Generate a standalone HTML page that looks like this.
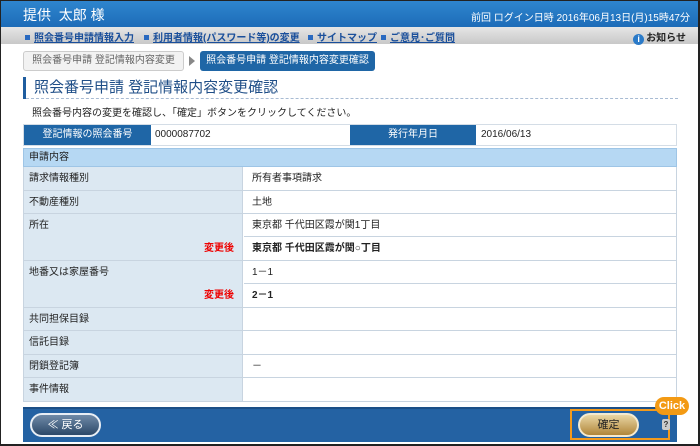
<!DOCTYPE html>
<html><head><meta charset="utf-8"><style>
*{margin:0;padding:0;box-sizing:border-box}
body{width:700px;height:446px;overflow:hidden;background:#fff;font-family:"Liberation Sans","Noto Sans CJK JP",sans-serif;font-size:11px;color:#222;position:relative}
.frame{position:absolute;left:0;top:0;width:700px;height:446px;border:1px solid #222;border-bottom-width:2px;border-right-width:2px;pointer-events:none;z-index:9}
.hdr{position:absolute;left:0;top:0;width:700px;height:27px;background:linear-gradient(#2f86cf,#1d6cb8);color:#fff}
.hdr .n{position:absolute;left:23px;top:5px;font-size:14px}
.hdr .d{position:absolute;right:10px;top:9px;font-size:10px}
.nav{position:absolute;left:0;top:27px;width:700px;height:17px;background:linear-gradient(#e6e6e6,#c8c8c8);font-size:10px;font-weight:bold}
.nav a{position:absolute;top:2px;color:#1a4f9b;text-decoration:underline;white-space:nowrap}
.nav a:before{content:"";display:inline-block;width:5px;height:5px;background:#2a6ac0;margin-right:4px;vertical-align:1px}
.nav .info{position:absolute;right:14px;top:2px;color:#222}
.nav .info i{display:inline-block;width:11px;height:11px;border-radius:50%;background:#2a7ac8;color:#fff;font-size:9px;text-align:center;line-height:11px;font-style:normal;margin-right:2px;vertical-align:-1px}
.bc1{position:absolute;left:23px;top:51px;width:161px;height:20px;border:1px solid #ccc;background:#f2f2f2;border-radius:3px;color:#666;font-size:10px;text-align:center;line-height:18px}
.arr{position:absolute;left:189px;top:56px;border-left:6px solid #888;border-top:5px solid transparent;border-bottom:5px solid transparent}
.bc2{position:absolute;left:200px;top:51px;width:175px;height:20px;background:#1f66a6;border-radius:3px;color:#fff;font-size:10px;text-align:center;line-height:20px}
.ttl{position:absolute;left:23px;top:77px;height:22px;border-left:3px solid #1f5d9f;padding-left:8px;font-size:15px;color:#1f4e87;line-height:22px}
.dash{position:absolute;left:26px;top:98px;width:652px;border-top:1px dashed #a8bbd3}
.desc{position:absolute;left:32px;top:104px;font-size:10px}
.r1{position:absolute;left:23px;top:124px;width:654px;height:22px;border:1px solid #d4dde6;font-size:10px}
.r1 div{position:absolute;top:0;height:20px;line-height:20px}
.lb{background:#1f66a6;color:#fff;text-align:center}
.sec{position:absolute;left:23px;top:148px;width:654px;height:19px;background:#b6d8f3;border:1px solid #9ec5e6;padding-left:5px;line-height:18px;font-size:10px}
.row{position:absolute;left:23px;width:654px;border-bottom:1px solid #c8d4e0;border-left:1px solid #c8d4e0;border-right:1px solid #c8d4e0}
.row .l{position:absolute;left:0;top:0;width:219px;height:100%;background:#dce8f2;border-right:1px solid #c8d4e0;padding-left:5px;line-height:23px;font-size:10px}
.row .v{position:absolute;left:220px;right:0;height:23px;padding-left:8px;line-height:23px;font-size:10px}
.red{position:absolute;right:8px;color:#e00;font-weight:bold;font-size:10px}
.foot{position:absolute;left:23px;top:407px;width:654px;height:35px;background:#2462a3;border-top:2px solid #1b4f87}
.back{position:absolute;left:30px;top:413px;width:71px;height:24px;border-radius:12px;border:2px solid #e8eef5;background:linear-gradient(#6f8aa8,#2c4868);color:#fff;font-size:11px;text-align:center;line-height:20px}
.box{position:absolute;left:570px;top:409px;width:100px;height:31px;border:2px solid #f29a1d}
.ok{position:absolute;left:578px;top:413px;width:61px;height:24px;border-radius:12px;border:2px solid #f4ead0;background:linear-gradient(#e9d6a4,#b0863a);color:#222;font-size:11px;text-align:center;line-height:20px}
.q{position:absolute;left:662px;top:419px;width:8px;height:11px;background:#ccc;border-radius:2px;font-size:8px;font-weight:bold;text-align:center;line-height:11px;color:#333}
.click{position:absolute;left:655px;top:397px;width:34px;height:18px;border-radius:9px;background:#f39a14;color:#fff;font-size:11px;font-weight:bold;text-align:center;line-height:18px}
</style></head><body>
<div class="hdr"><span class="n">提供&nbsp; 太郎 様</span><span class="d">前回 ログイン日時 2016年06月13日(月)15時47分</span></div>
<div class="nav"><a style="left:25px">照会番号申請情報入力</a><a style="left:144px">利用者情報(パスワード等)の変更</a><a style="left:308px">サイトマップ</a><a style="left:381px">ご意見･ご質問</a><span class="info"><i>i</i>お知らせ</span></div>
<div class="bc1">照会番号申請 登記情報内容変更</div><div class="arr"></div>
<div class="bc2">照会番号申請 登記情報内容変更確認</div>
<div class="ttl">照会番号申請 登記情報内容変更確認</div>
<div class="dash"></div>
<div class="desc">照会番号内容の変更を確認し、「確定」ボタンをクリックしてください。</div>
<div class="r1"><div class="lb" style="left:0;width:127px">登記情報の照会番号</div><div style="left:131px">0000087702</div><div class="lb" style="left:326px;width:126px">発行年月日</div><div style="left:457px">2016/06/13</div></div>
<div class="sec">申請内容</div>
<div class="row" style="top:167px;height:24px"><div class="l">請求情報種別</div><div class="v" style="top:0">所有者事項請求</div></div>
<div class="row" style="top:191px;height:23px"><div class="l">不動産種別</div><div class="v" style="top:0">土地</div></div>
<div class="row" style="top:214px;height:47px"><div class="l">所在<span class="red" style="top:23px">変更後</span></div><div class="v" style="top:0;border-bottom:1px solid #c8d4e0">東京都 千代田区霞が関1丁目</div><div class="v" style="top:23px;font-weight:bold">東京都 千代田区霞が関○丁目</div></div>
<div class="row" style="top:261px;height:47px"><div class="l">地番又は家屋番号<span class="red" style="top:23px">変更後</span></div><div class="v" style="top:0;border-bottom:1px solid #c8d4e0">1－1</div><div class="v" style="top:23px;font-weight:bold">2－1</div></div>
<div class="row" style="top:308px;height:23px"><div class="l">共同担保目録</div></div>
<div class="row" style="top:331px;height:24px"><div class="l">信託目録</div></div>
<div class="row" style="top:355px;height:23px"><div class="l">閉鎖登記簿</div><div class="v" style="top:0">－</div></div>
<div class="row" style="top:378px;height:24px"><div class="l">事件情報</div></div>
<div class="foot"></div>
<div class="back">≪ 戻る</div>
<div class="box"></div>
<div class="ok">確定</div>
<div class="q">?</div>
<div class="click">Click</div>
<div class="frame"></div>
</body></html>
